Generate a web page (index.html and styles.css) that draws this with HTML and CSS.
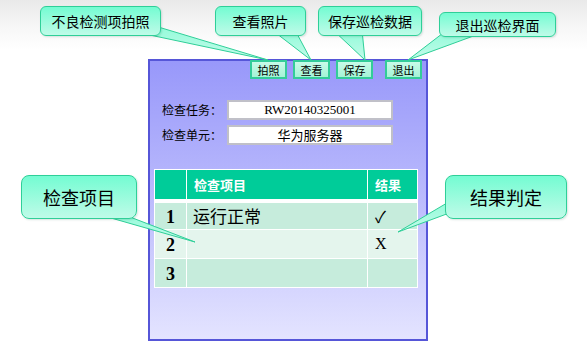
FILE: index.html
```html
<!DOCTYPE html>
<html lang="zh-CN">
<head>
    <meta charset="UTF-8">
    <title>巡检界面说明</title>
    <link rel="stylesheet" href="styles.css">
</head>
<body>
    <div class="page">
        <div class="panel">
            <div class="toolbar">
                <button class="tool-btn">拍照</button>
                <button class="tool-btn">查看</button>
                <button class="tool-btn">保存</button>
                <button class="tool-btn tool-exit">退出</button>
            </div>

            <div class="form">
                <div class="form-row">
                    <span class="form-label">检查任务：</span>
                    <div class="form-value serif">RW20140325001</div>
                </div>
                <div class="form-row">
                    <span class="form-label">检查单元：</span>
                    <div class="form-value">华为服务器</div>
                </div>
            </div>

            <table class="check-table">
                <thead>
                    <tr>
                        <th class="col-no"></th>
                        <th class="col-item">检查项目</th>
                        <th class="col-result">结果</th>
                    </tr>
                </thead>
                <tbody>
                    <tr>
                        <td class="no">1</td>
                        <td class="item">运行正常</td>
                        <td class="result">✓</td>
                    </tr>
                    <tr class="alt">
                        <td class="no">2</td>
                        <td class="item"></td>
                        <td class="result">X</td>
                    </tr>
                    <tr>
                        <td class="no">3</td>
                        <td class="item"></td>
                        <td class="result"></td>
                    </tr>
                </tbody>
            </table>
        </div>

        <!-- callout pointers, drawn over the panel -->
        <svg class="tails" width="587" height="348" viewBox="0 0 587 348">
            <defs>
                <linearGradient id="tailFill" x1="0" y1="0" x2="0" y2="1">
                    <stop offset="0" stop-color="#8ffbd8"/>
                    <stop offset="1" stop-color="#c4fbea"/>
                </linearGradient>
            </defs>
            <g fill="url(#tailFill)" stroke="#2fcf98" stroke-width="1">
                <polygon points="145,23 268,60 145,34"/>
                <polygon points="272,30 311,60 295,30"/>
                <polygon points="333,30 365,60 362,30"/>
                <polygon points="447,30 408,60 487,31"/>
                <polygon points="90,212 195,242 117,212"/>
                <polygon points="452,200 398,232 452,212"/>
            </g>
        </svg>

        <div class="callout c-photo">不良检测项拍照</div>
        <div class="callout c-view">查看照片</div>
        <div class="callout c-save">保存巡检数据</div>
        <div class="callout c-exit">退出巡检界面</div>
        <div class="callout big c-item">检查项目</div>
        <div class="callout big c-result">结果判定</div>
    </div>
</body>
</html>
```

FILE: styles.css
```css
* {
    margin: 0;
    padding: 0;
    box-sizing: border-box;
}

body {
    font-family: "Noto Sans CJK SC", "DejaVu Sans", sans-serif;
    color: #000;
    background: #fff;
}

.page {
    position: relative;
    width: 587px;
    height: 348px;
    overflow: hidden;
    background: linear-gradient(to bottom, #e9e9e9 0, #f6f6f6 25px, #fff 50px);
    padding-top: 59px;
    padding-left: 148px;
}

.serif {
    font-family: "Liberation Serif", "DejaVu Serif", serif;
}

/* main panel */
.panel {
    width: 280px;
    height: 282px;
    border: 2px solid #5656d8;
    background: linear-gradient(to bottom, #9898fa 0%, #b4b4fc 40%, #e4e4ff 100%);
}

.toolbar {
    display: flex;
    justify-content: flex-end;
    padding-right: 4px;
    margin-top: -1px;
}

.tool-btn {
    width: 37px;
    height: 19px;
    margin-left: 6px;
    border: 2px solid #33cc99;
    background: linear-gradient(to bottom, #c8fbe8, #a4f3d6);
    font-family: "Noto Sans CJK SC", sans-serif;
    font-size: 11px;
    line-height: 14px;
    color: #000;
}

.tool-exit {
    margin-left: 12px;
}

.form {
    margin-top: 21px;
    display: flex;
    flex-direction: column;
    gap: 5px;
}

.form-row {
    display: flex;
    align-items: center;
    padding-left: 12px;
}

.form-label {
    width: 65px;
    font-size: 12px;
    line-height: 20px;
}

.form-value {
    width: 166px;
    height: 20px;
    border: 2px solid #c0c0c8;
    background: #fff;
    text-align: center;
    font-size: 13px;
    line-height: 16px;
}

/* check list */
.check-table {
    margin: 24px 0 0 4px;
    width: 263px;
    border-collapse: collapse;
    table-layout: fixed;
}

.check-table th,
.check-table td {
    border: 1px solid #fff;
}

.check-table th {
    height: 31px;
    background: #00cc99;
    color: #fff;
    font-size: 13px;
    font-weight: bold;
    text-align: left;
    padding-left: 7px;
    border-bottom: 4px solid #fff;
}

.col-no { width: 32px; }
.col-item { width: 181px; }
.col-result { width: 50px; }

.check-table td {
    height: 29px;
    background: #c6ecdc;
}

.check-table tr.alt td {
    background: #e4f5ed;
}

.check-table .no {
    text-align: center;
    font-family: "Liberation Serif", serif;
    font-weight: bold;
    font-size: 18px;
    padding-top: 3px;
}

.check-table .item {
    font-size: 17px;
    padding-left: 6px;
}

.check-table .result {
    font-family: "Liberation Serif", "DejaVu Serif", serif;
    font-size: 16px;
    padding-left: 7px;
}

/* callouts */
.tails {
    position: absolute;
    left: 0;
    top: 0;
    pointer-events: none;
}

.callout {
    position: absolute;
    display: flex;
    align-items: center;
    justify-content: center;
    border: 1px solid #2fcf98;
    border-radius: 6px;
    background: linear-gradient(to bottom, #74fcd2, #bffbe8);
    box-shadow: 1px 1px 2px rgba(0, 80, 60, 0.15);
    font-size: 14px;
    white-space: nowrap;
}

.callout.big {
    font-size: 18px;
    border-radius: 8px;
}

.c-photo { left: 40px; top: 6px; width: 121px; height: 30px; }
.c-view { left: 215px; top: 6px; width: 91px; height: 30px; }
.c-save { left: 318px; top: 6px; width: 104px; height: 30px; }
.c-exit { left: 439px; top: 12px; width: 117px; height: 25px; }
.c-item { left: 21px; top: 175px; width: 116px; height: 44px; }
.c-result { left: 445px; top: 175px; width: 122px; height: 44px; }
```
